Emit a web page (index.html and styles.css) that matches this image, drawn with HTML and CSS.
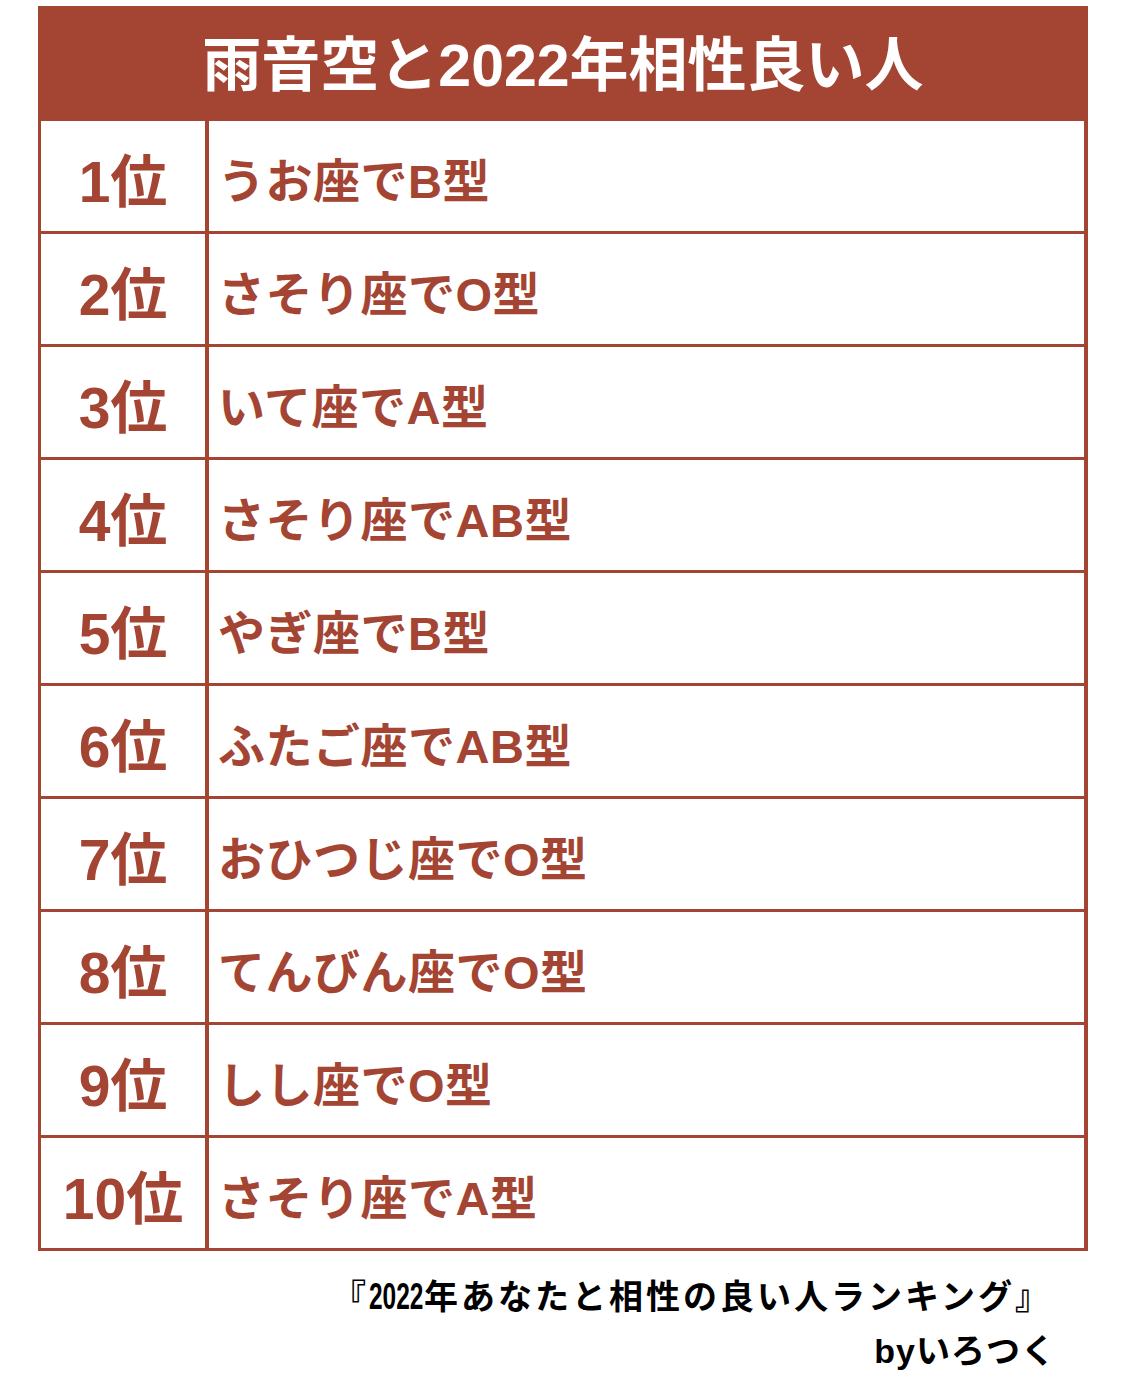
FILE: index.html
```html
<!DOCTYPE html>
<html lang="ja">
<head>
<meta charset="utf-8">
<title>雨音空と2022年相性良い人</title>
<link rel="stylesheet" href="styles.css">
</head>
<body>
<div class="page">
  <div class="ranking">
    <div class="ranking-head">雨音空と2022年相性良い人</div>
    <div class="row"><div class="rank">1位</div><div class="label">うお座でB型</div></div>
    <div class="row"><div class="rank">2位</div><div class="label">さそり座でO型</div></div>
    <div class="row"><div class="rank">3位</div><div class="label">いて座でA型</div></div>
    <div class="row"><div class="rank">4位</div><div class="label">さそり座でAB型</div></div>
    <div class="row"><div class="rank">5位</div><div class="label">やぎ座でB型</div></div>
    <div class="row"><div class="rank">6位</div><div class="label">ふたご座でAB型</div></div>
    <div class="row"><div class="rank">7位</div><div class="label">おひつじ座でO型</div></div>
    <div class="row"><div class="rank">8位</div><div class="label">てんびん座でO型</div></div>
    <div class="row"><div class="rank">9位</div><div class="label">しし座でO型</div></div>
    <div class="row"><div class="rank">10位</div><div class="label">さそり座でA型</div></div>
  </div>
  <div class="credit">
    <div class="credit-title">『<span class="narrow"><span class="narrow-inner">2022</span></span>年あなたと相性の良い人ランキング』</div>
    <div class="credit-by">byいろつく</div>
  </div>
</div>
</body>
</html>
```

FILE: styles.css
```css
* { box-sizing: border-box; }

html, body {
  margin: 0;
  padding: 0;
  background: #ffffff;
}

body {
  font-family: "Liberation Sans", "Noto Sans CJK JP", sans-serif;
  font-weight: 700;
}

.page {
  width: 1125px;
  padding: 6px 37px 0 38px;
}

.ranking {
  width: 1050px;
  border-left: 3px solid #a44533;
  border-right: 4px solid #a44533;
}

.ranking-head {
  height: 115px;
  margin: 0 -4px 0 -3px;
  background: #a44533;
  color: #ffffff;
  font-size: 59px;
  display: flex;
  align-items: center;
  justify-content: center;
  padding-bottom: 6px;
}

.row {
  height: 113px;
  display: flex;
  border-bottom: 3px solid #a44533;
  color: #a44533;
}

.rank {
  width: 168px;
  border-right: 4px solid #a44533;
  font-size: 57px;
  display: flex;
  align-items: center;
  justify-content: center;
  padding-left: 0;
  padding-top: 2px;
}

.label {
  flex: 1;
  font-size: 47px;
  letter-spacing: 0.5px;
  display: flex;
  align-items: center;
  padding-left: 9px;
  padding-top: 2px;
}

.credit {
  display: flex;
  flex-direction: column;
  align-items: flex-end;
  padding-top: 22px;
  color: #000000;
}

.credit-title {
  font-size: 34px;
  letter-spacing: 3px;
  line-height: 48px;
  margin-right: 36px;
}

.narrow {
  display: inline-block;
  width: 55px;
  white-space: nowrap;
  letter-spacing: 0;
  vertical-align: bottom;
}

.narrow-inner {
  display: inline-block;
  font-size: 36px;
  transform: scaleX(0.68);
  transform-origin: left center;
}

.credit-by {
  font-size: 34px;
  letter-spacing: 1px;
  line-height: 48px;
  margin-top: 6px;
  margin-right: 32px;
}
```
